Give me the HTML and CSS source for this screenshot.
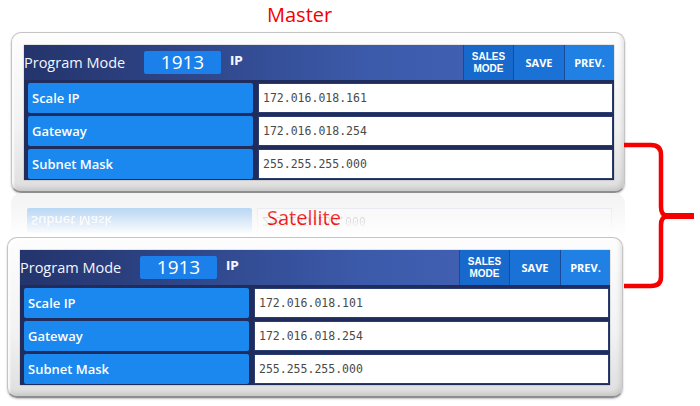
FILE: index.html
```html
<!DOCTYPE html>
<html>
<head>
<meta charset="utf-8">
<link rel="stylesheet" href="styles.css">
</head>
<body>
<div class="page">
  <div class="title title-master">Master</div>

  <div class="frame frame-master">
    <div class="panel">
      <div class="header">
        <div class="pm">Program Mode</div>
        <div class="code">1913</div>
        <div class="ip">IP</div>
        <div class="spacer"></div>
        <div class="btn btn-sales">SALES<br>MODE</div>
        <div class="btn btn-save">SAVE</div>
        <div class="btn btn-prev">PREV.</div>
      </div>
      <div class="row"><div class="label">Scale IP</div><div class="value">172.016.018.161</div></div>
      <div class="row"><div class="label">Gateway</div><div class="value">172.016.018.254</div></div>
      <div class="row"><div class="label">Subnet Mask</div><div class="value">255.255.255.000</div></div>
    </div>
  </div>

  <div class="between">
    <div class="reflection">
      <div class="row row-reflect"><div class="label">Subnet Mask</div><div class="value">255.255.255.000</div></div>
    </div>
    <div class="title title-sat">Satellite</div>
  </div>

  <div class="frame frame-sat">
    <div class="panel">
      <div class="header">
        <div class="pm">Program Mode</div>
        <div class="code">1913</div>
        <div class="ip">IP</div>
        <div class="spacer"></div>
        <div class="btn btn-sales">SALES<br>MODE</div>
        <div class="btn btn-save">SAVE</div>
        <div class="btn btn-prev">PREV.</div>
      </div>
      <div class="row"><div class="label">Scale IP</div><div class="value">172.016.018.101</div></div>
      <div class="row"><div class="label">Gateway</div><div class="value">172.016.018.254</div></div>
      <div class="row"><div class="label">Subnet Mask</div><div class="value">255.255.255.000</div></div>
    </div>
  </div>

  <svg class="bracket" width="700" height="406" viewBox="0 0 700 406">
    <path d="M624 145 H651 Q661 145 661 155 V207 Q661 215 667 216 Q661 217 661 225 V277 Q661 286 651 286 H624" fill="none" stroke="#f40000" stroke-width="4.5" stroke-linejoin="round"/>
    <path d="M664 216 H694" fill="none" stroke="#f40000" stroke-width="6"/>
  </svg>
</div>
</body>
</html>
```

FILE: styles.css
```css
* { box-sizing: border-box; }
html, body {
  margin: 0;
  padding: 0;
  background: #ffffff;
}
body {
  width: 700px;
  height: 406px;
  overflow: hidden;
  font-family: "Open Sans", "DejaVu Sans", sans-serif;
}
.page {
  position: relative;
  width: 700px;
  height: 406px;
}
.title {
  color: #f20000;
  font-size: 20px;
  line-height: 30px;
  padding-left: 267px;
  font-family: "Open Sans", "Noto Sans", sans-serif;
}
.title-master {
  height: 32px;
}
.frame {
  border: 1px solid #c4c4c4;
  border-bottom: 2px solid #8e8e8e;
  border-radius: 10px;
  background: linear-gradient(180deg, #fdfdfd 0%, #f2f2f2 60%, #dedede 100%);
  box-shadow: inset -2px -3px 4px rgba(0, 0, 0, 0.10), inset 2px 2px 2px rgba(255, 255, 255, 0.9), 0 1px 2px rgba(0, 0, 0, 0.25);
}
.frame-master {
  margin-left: 11px;
  width: 614px;
  height: 161px;
  padding: 12px 11px 12px 12px;
}
.frame-sat {
  margin-left: 7px;
  width: 616px;
  height: 161px;
  padding: 12px 12px 12px 12px;
}
.panel {
  width: 590px;
  height: 135px;
  background: #1f2c5c;
  display: flex;
  flex-direction: column;
  gap: 3px;
  box-shadow: 0 0 1px rgba(0, 0, 0, 0.5);
}
.header {
  height: 35px;
  display: flex;
  align-items: center;
  background: linear-gradient(90deg, #24346c 0%, #2f4689 28%, #3c5aaa 58%, #4767ba 100%);
  color: #f4f6ff;
}
.pm {
  width: 120px;
  padding-left: 0;
  font-size: 14.5px;
}
.code {
  width: 77px;
  height: 23px;
  background: #1b80ea;
  border-radius: 2px;
  text-align: center;
  font-size: 19px;
  line-height: 23px;
  color: #ffffff;
}
.ip {
  margin-left: 9px;
  font-family: "DejaVu Sans", sans-serif;
  font-weight: bold;
  font-size: 11.5px;
  margin-top: -4px;
}
.spacer { flex: 1; }
.btn {
  height: 35px;
  display: flex;
  align-items: center;
  justify-content: center;
  text-align: center;
  color: #ffffff;
  font-weight: 700;
  font-size: 11px;
  line-height: 12px;
  border-left: 1px solid #174a9a;
}
.btn-sales {
  background: #1769cc;
  width: 50px;
  font-family: "Liberation Sans", Arial, sans-serif;
  font-size: 10px;
  line-height: 11.6px;
}
.btn-save { background: #1b72d6; width: 51px; }
.btn-prev { background: #2080e4; width: 50px; }
.row {
  height: 30px;
  display: flex;
  gap: 5px;
  padding: 0 1px 0 4px;
}
.label {
  width: 225px;
  background: #1a88ee;
  border-radius: 2px;
  color: #ffffff;
  font-weight: 600;
  font-size: 13px;
  display: flex;
  align-items: center;
  padding-left: 4px;
}
.value {
  flex: 1;
  background: #ffffff;
  border: 1px solid #2b3c70;
  color: #4a4a4a;
  font-family: "DejaVu Sans Mono", monospace;
  font-size: 11.5px;
  display: flex;
  align-items: center;
  padding-left: 4px;
}
.between {
  height: 44px;
  display: grid;
}
.between > * {
  grid-area: 1 / 1;
}
.reflection {
  margin-left: 11px;
  width: 614px;
  height: 44px;
  padding: 15px 11px 0 12px;
  border-radius: 10px 10px 0 0;
  background: linear-gradient(180deg, #f3f3f3 0%, #f8f8f8 50%, #ffffff 100%);
}
.row-reflect {
  width: 590px;
  height: 26px;
  transform: scaleY(-1);
  opacity: 0.28;
  -webkit-mask-image: linear-gradient(0deg, #000 0%, rgba(0,0,0,0.5) 50%, rgba(0,0,0,0) 100%);
  mask-image: linear-gradient(0deg, #000 0%, rgba(0,0,0,0.5) 50%, rgba(0,0,0,0) 100%);
}
.row-reflect .value {
  border-color: #c8cfe0;
}
.title-sat {
  margin-top: 10px;
  height: 30px;
  align-self: start;
  justify-self: start;
  margin-left: 267px;
  padding-left: 0;
}
.bracket {
  position: absolute;
  left: 0;
  top: 0;
  pointer-events: none;
}
```
